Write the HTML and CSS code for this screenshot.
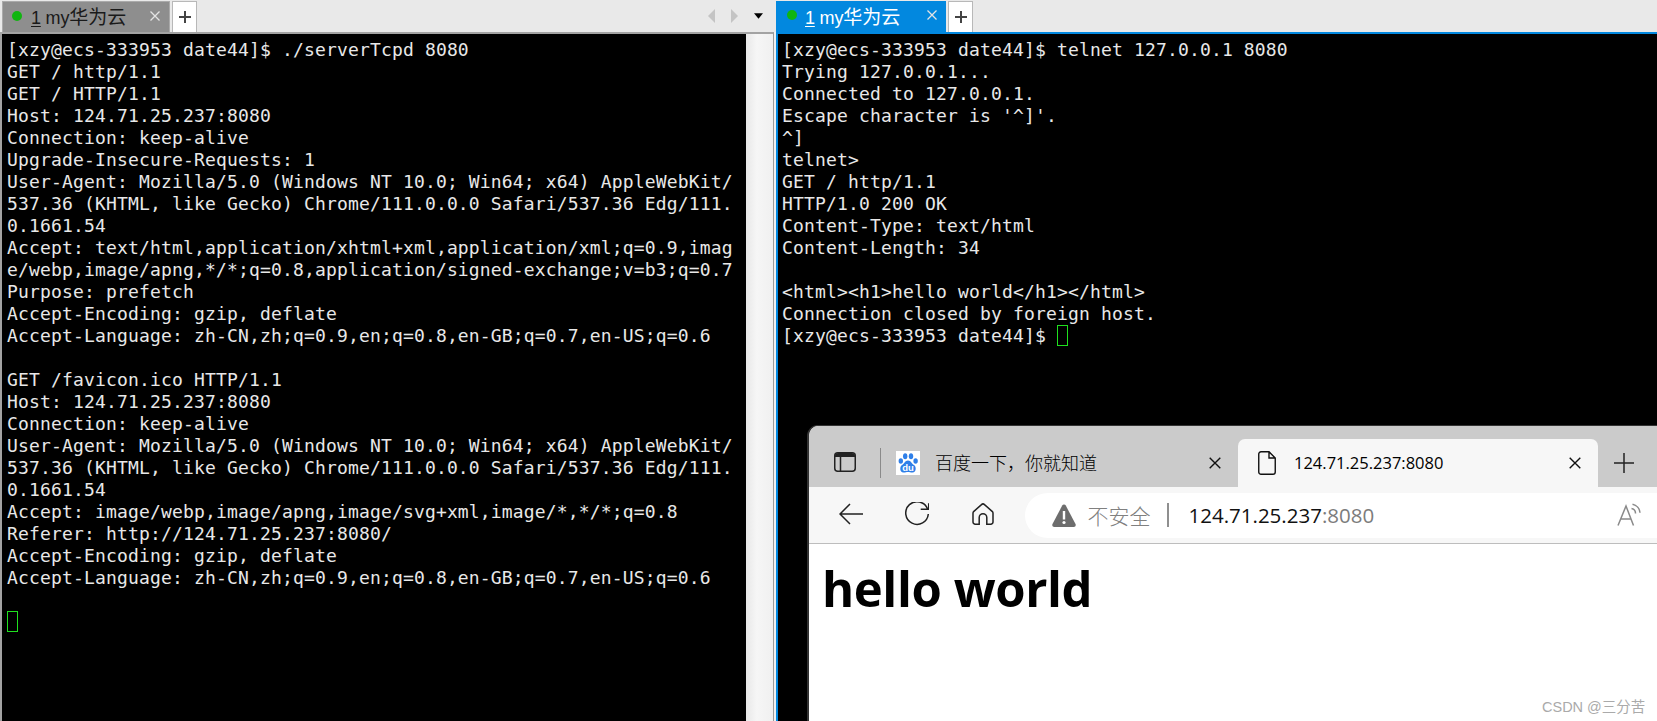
FILE: index.html
```html
<!DOCTYPE html>
<html lang="zh-CN">
<head>
<meta charset="utf-8">
<title>my华为云</title>
<link rel="stylesheet" href="styles.css">
</head>
<body>
<div class="desk">
  <section class="pane pane-left">
    <div class="tabbar">
      <div class="tab tab-idle">
        <span class="dot"></span>
        <span class="tab-label"><u>1</u> my<span class="cjk">华为云</span></span>
        <svg class="tab-x" viewBox="0 0 10 10"><path d="M0.5 0.5L9.5 9.5M9.5 0.5L0.5 9.5"/></svg>
      </div>
      <div class="plus"><svg viewBox="0 0 12 12"><path d="M6 0V12M0 6H12"/></svg></div>
      <div class="tab-nav">
        <svg class="nav-arrow" viewBox="0 0 8 14"><path d="M7 0V14L0 7Z"/></svg>
        <svg class="nav-arrow" viewBox="0 0 8 14"><path d="M1 0V14L8 7Z"/></svg>
        <svg class="nav-menu" viewBox="0 0 10 6"><path d="M0 0H10L5 6Z"/></svg>
      </div>
    </div>
    <div class="screen screen-left">
<pre class="term">[xzy@ecs-333953 date44]$ ./serverTcpd 8080
GET / http/1.1
GET / HTTP/1.1
Host: 124.71.25.237:8080
Connection: keep-alive
Upgrade-Insecure-Requests: 1
User-Agent: Mozilla/5.0 (Windows NT 10.0; Win64; x64) AppleWebKit/
537.36 (KHTML, like Gecko) Chrome/111.0.0.0 Safari/537.36 Edg/111.
0.1661.54
Accept: text/html,application/xhtml+xml,application/xml;q=0.9,imag
e/webp,image/apng,*/*;q=0.8,application/signed-exchange;v=b3;q=0.7
Purpose: prefetch
Accept-Encoding: gzip, deflate
Accept-Language: zh-CN,zh;q=0.9,en;q=0.8,en-GB;q=0.7,en-US;q=0.6

GET /favicon.ico HTTP/1.1
Host: 124.71.25.237:8080
Connection: keep-alive
User-Agent: Mozilla/5.0 (Windows NT 10.0; Win64; x64) AppleWebKit/
537.36 (KHTML, like Gecko) Chrome/111.0.0.0 Safari/537.36 Edg/111.
0.1661.54
Accept: image/webp,image/apng,image/svg+xml,image/*,*/*;q=0.8
Referer: http://124.71.25.237:8080/
Accept-Encoding: gzip, deflate
Accept-Language: zh-CN,zh;q=0.9,en;q=0.8,en-GB;q=0.7,en-US;q=0.6

<span class="cursor"></span></pre>
      <div class="scrollbar"></div>
    </div>
  </section>
  <section class="pane pane-right">
    <div class="tabbar">
      <div class="tab tab-active">
        <span class="dot"></span>
        <span class="tab-label"><u>1</u> my<span class="cjk">华为云</span></span>
        <svg class="tab-x" viewBox="0 0 10 10"><path d="M0.5 0.5L9.5 9.5M9.5 0.5L0.5 9.5"/></svg>
      </div>
      <div class="plus"><svg viewBox="0 0 12 12"><path d="M6 0V12M0 6H12"/></svg></div>
    </div>
    <div class="screen screen-right">
<pre class="term term-right">[xzy@ecs-333953 date44]$ telnet 127.0.0.1 8080
Trying 127.0.0.1...
Connected to 127.0.0.1.
Escape character is '^]'.
^]
telnet&gt;
GET / http/1.1
HTTP/1.0 200 OK
Content-Type: text/html
Content-Length: 34

&lt;html&gt;&lt;h1&gt;hello world&lt;/h1&gt;&lt;/html&gt;
Connection closed by foreign host.
[xzy@ecs-333953 date44]$ <span class="cursor"></span></pre>
    </div>
  </section>
</div>

<div class="browser">
  <div class="b-tabs">
    <svg class="ic-side" viewBox="0 0 22 20"><rect x="0.75" y="0.75" width="20.5" height="18.5" rx="3"/><path class="fill" d="M1 3.5A3 3 0 0 1 4 1H18A3 3 0 0 1 21 3.5V5H1Z"/><path d="M6.5 5V19"/></svg>
    <span class="b-div"></span>
    <div class="b-tab b-tab-idle">
      <svg class="fav" viewBox="0 0 24 24">
        <rect width="24" height="24" fill="#fff"/>
        <g fill="#2f7fe8"><ellipse cx="4.8" cy="10" rx="2.2" ry="2.8"/><ellipse cx="9.2" cy="5.2" rx="2.2" ry="3"/><ellipse cx="15" cy="5.2" rx="2.2" ry="3"/><ellipse cx="19.6" cy="10" rx="2.2" ry="2.8"/><path d="M12 9.5C15 9.5 15.5 12.5 18 14C20.5 15.5 20.5 21.5 16.5 21.5C14.5 21.5 13.5 21 12 21C10.5 21 9.5 21.5 7.5 21.5C3.5 21.5 3.5 15.5 6 14C8.5 12.5 9 9.5 12 9.5Z"/></g>
        <text class="fav-du" x="12" y="20">du</text>
      </svg>
      <span class="b-title">百度一下&#xFF0C;你就知道</span>
      <svg class="b-x" viewBox="0 0 12 12"><path d="M0.7 0.7L11.3 11.3M11.3 0.7L0.7 11.3"/></svg>
    </div>
    <div class="b-tab b-tab-on">
      <svg class="ic-doc" viewBox="0 0 18 24"><path d="M3 0.75H11L17.25 7V21A2.25 2.25 0 0 1 15 23.25H3A2.25 2.25 0 0 1 0.75 21V3A2.25 2.25 0 0 1 3 0.75ZM11 0.75V7H17.25"/></svg>
      <span class="b-url-tab">124.71.25.237:8080</span>
      <svg class="b-x" viewBox="0 0 12 12"><path d="M0.7 0.7L11.3 11.3M11.3 0.7L0.7 11.3"/></svg>
    </div>
    <svg class="b-new" viewBox="0 0 20 20"><path d="M10 0V20M0 10H20"/></svg>
  </div>
  <div class="b-bar">
    <svg class="ic-back" viewBox="0 0 24 22"><path d="M24 11H1M11 1L1 11L11 21"/></svg>
    <svg class="ic-reload" viewBox="0 0 24 24"><path d="M22.6 7A11.3 11.3 0 1 0 23.3 12M23.7 1.3V7.3H15.7"/></svg>
    <svg class="ic-home" viewBox="0 0 22 22"><path d="M9.5 1.6L1.6 8.6A2.5 2.5 0 0 0 1 10.2V19A2.2 2.2 0 0 0 3.2 21.2H7.2V14.5A3.8 3.8 0 0 1 14.8 14.5V21.2H18.8A2.2 2.2 0 0 0 21 19V10.2A2.5 2.5 0 0 0 20.4 8.6L12.5 1.6A2.2 2.2 0 0 0 9.5 1.6Z"/></svg>
    <div class="pill">
      <svg class="ic-warn" viewBox="0 0 24 23"><path d="M12 0.5C12.8 0.5 13.4 0.9 13.8 1.6L23.5 20C24.2 21.4 23.3 23 21.7 23H2.3C0.7 23 -0.2 21.4 0.5 20L10.2 1.6C10.6 0.9 11.2 0.5 12 0.5Z"/><rect class="cut" x="10.8" y="7" width="2.4" height="8.5"/><circle class="cut" cx="12" cy="18.5" r="1.6"/></svg>
      <span class="unsafe">不安全</span>
      <span class="pill-div"></span>
      <span class="addr">124.71.25.237<span class="addr-port">:8080</span></span>
      <svg class="ic-read" viewBox="0 0 24 23"><path d="M1 22.5L9 3L16.5 22.5M3.8 16H14"/><path d="M14.5 5.5A5 5 0 0 1 18.5 10.5M15.5 1.2A9.5 9.5 0 0 1 23 9.8"/></svg>
    </div>
  </div>
  <div class="b-page">
    <h1>hello world</h1>
  </div>
</div>
<div class="mark">CSDN @三分苦</div>
</body>
</html>
```

FILE: styles.css
```css
* { box-sizing: border-box; }
html, body { margin: 0; height: 100%; overflow: hidden; background: #f0f0f0; }
.desk { display: flex; height: 721px; }
.pane { display: flex; flex-direction: column; }
.pane-left { width: 776px; }
.pane-right { flex: 1; min-width: 0; }

.tabbar { display: flex; height: 32px; background: #e9e9e9; padding-top: 1px; flex: none; }
.pane-left .tabbar { padding-left: 2px; }
.tab { display: flex; align-items: center; height: 31px; padding: 0 0 3px 10px; font: 18px "Liberation Sans", "Noto Sans CJK SC", sans-serif; }
.tab-idle { width: 168px; background: #8e8e8e; color: #1a1a1a; border: 1px solid #aaa; border-bottom: 0; padding-left: 9px; }
.tab-idle .dot { margin-right: 9px; }
.tab-active { width: 170px; background: #0288df; color: #fff; padding-left: 11px; }
.dot { width: 10px; height: 10px; border-radius: 50%; background: #10b510; flex: none; margin-right: 8px; }
.tab-label { white-space: nowrap; flex: 1; letter-spacing: -0.2px; }
.cjk { font-family: "Noto Sans CJK SC", sans-serif; font-size: 19px; letter-spacing: 0; }
.tab-label u { text-underline-offset: 2px; }
.tab-x { width: 10px; height: 10px; margin-right: 9px; fill: none; stroke: #e4e4e4; stroke-width: 1.3; }
.plus { width: 25px; height: 31px; margin-left: 2px; background: #fff; border: 1px solid #b8b8b8; border-bottom: 0; display: flex; align-items: center; justify-content: center; padding-bottom: 1px; }
.plus svg { width: 12px; height: 12px; fill: none; stroke: #444; stroke-width: 2; }
.tab-nav { margin-left: auto; margin-right: 9px; display: flex; align-items: center; padding-bottom: 1px; }
.nav-arrow { width: 8px; height: 14px; fill: #c4c4c4; margin-right: 14px; }
.nav-menu { width: 9px; height: 6px; fill: #000; margin-left: 2px; margin-right: 4px; }

.screen { flex: 1; display: flex; min-height: 0; }
.screen-left { border-top: 2px solid #a3a3a3; border-left: 2px solid #a3a3a3; margin-right: 2px; border-right: 1px solid #9a9a9a; }
.screen-right { border-top: 2px solid #0288df; border-left: 2px solid #0288df; background: #000; }
.term { margin: 0; flex: 1; min-width: 0; background: #000; color: #e8e8e8; padding: 5px 0 0 5px; font: 18px/22px "DejaVu Sans Mono", monospace; letter-spacing: 0.16px; white-space: pre; overflow: hidden; }
.term-right { padding-left: 4px; }
.cursor { display: inline-block; width: 11px; height: 21px; border: 1.5px solid #1fe01f; vertical-align: top; }
.scrollbar { width: 27px; flex: none; background: linear-gradient(90deg, #e8e8e8, #f6f6f6 40%, #f0f0f0); }

.browser { position: absolute; left: 807px; top: 425px; width: 850px; height: 296px; background: #fff; border-top: 1.5px solid #333; border-left: 2.5px solid #333; border-top-left-radius: 11px; overflow: hidden; font-family: "Open Sans", "Noto Sans CJK SC", sans-serif; color: #000; }
.b-tabs { height: 60.5px; background: #cbcbcb; display: flex; align-items: flex-end; position: relative; padding-left: 24.5px; }
.ic-side { width: 22px; height: 20px; fill: none; stroke: #222; stroke-width: 1.5; align-self: flex-start; margin-top: 25.5px; flex: none; }
.ic-side .fill { fill: #222; stroke: none; }
.b-div { width: 1.5px; height: 30px; background: #8a8a8a; align-self: flex-start; margin-top: 21.5px; margin-left: 24px; flex: none; }
.b-tab { height: 48px; display: flex; align-items: center; flex: none; }
.b-tab-idle { width: 357px; padding-left: 15px; }
.b-tab-on { width: 360px; background: #f7f7f7; border-radius: 7px 7px 0 0; padding-left: 20px; }
.fav { width: 24px; height: 24px; flex: none; }
.fav-du { font: bold 9.5px "Liberation Sans", sans-serif; fill: #fff; text-anchor: middle; }
.b-title { font: 300 18px/24px "Noto Sans CJK SC", sans-serif; margin-left: 15px; margin-top: -2px; flex: 1; white-space: nowrap; }
.b-x { width: 12px; height: 12px; flex: none; fill: none; stroke: #111; stroke-width: 1.4; margin-right: 17px; }
.ic-doc { width: 18px; height: 24px; fill: none; stroke: #111; stroke-width: 1.4; flex: none; }
.b-url-tab { font-size: 16.5px; margin-left: 18px; flex: 1; white-space: nowrap; }
.b-new { position: absolute; left: 804.5px; top: 27px; width: 20px; height: 20px; fill: none; stroke: #222; stroke-width: 1.5; }

.b-bar { height: 57px; background: #f7f7f7; border-bottom: 1.5px solid #bdbdbd; display: flex; align-items: flex-start; padding-left: 29.5px; }
.ic-back { width: 24px; height: 22px; margin-top: 16px; fill: none; stroke: #222; stroke-width: 1.5; flex: none; }
.ic-reload { width: 24px; height: 24px; margin-top: 15px; margin-left: 42px; fill: none; stroke: #222; stroke-width: 1.5; flex: none; }
.ic-home { width: 22px; height: 22px; margin-top: 16px; margin-left: 43px; fill: none; stroke: #222; stroke-width: 1.5; flex: none; }
.pill { margin-left: 31px; margin-top: 6px; height: 45px; flex: 1; background: #fff; border-radius: 23px 0 0 23px; display: flex; align-items: center; padding-left: 27px; position: relative; }
.ic-warn { width: 24px; height: 23px; fill: #6d6d6d; flex: none; }
.ic-warn .cut { fill: #fff; }
.unsafe { font: 300 21px "Noto Sans CJK SC", sans-serif; color: #808080; margin-left: 12px; white-space: nowrap; }
.pill-div { width: 2px; height: 24px; background: #8f8f8f; margin-left: 16px; flex: none; }
.addr { font-size: 20.5px; margin-left: 20px; white-space: nowrap; color: #111; }
.addr-port { color: #7c7c7c; }
.ic-read { position: absolute; left: 592px; top: 10px; width: 24px; height: 23px; fill: none; stroke: #8a8a8a; stroke-width: 1.5; }

.b-page { padding-left: 13px; }
.b-page h1 { margin: 14px 0 0; font: bold 49px/60px "Open Sans", sans-serif; color: #000; letter-spacing: -0.4px; }

.mark { position: absolute; left: 1542px; top: 695px; font: 14.5px "Liberation Sans", "Noto Sans CJK SC", sans-serif; color: #aaa; white-space: nowrap; }
```
